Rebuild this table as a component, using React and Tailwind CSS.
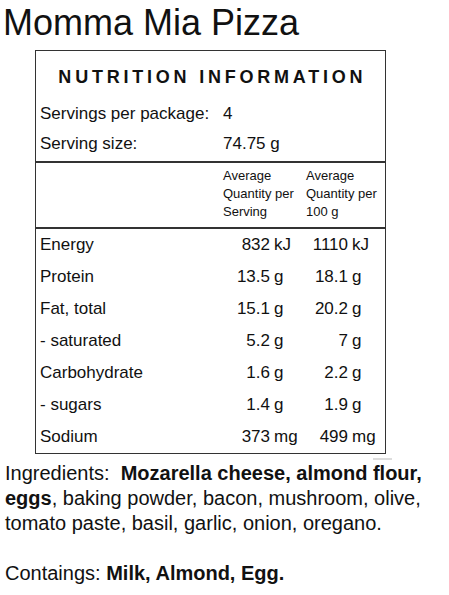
import React from "react";

const rows = [
  { label: "Energy", a: "832", au: "kJ", b: "1110", bu: "kJ" },
  { label: "Protein", a: "13.5", au: "g", b: "18.1", bu: "g" },
  { label: "Fat, total", a: "15.1", au: "g", b: "20.2", bu: "g" },
  { label: "- saturated", a: "5.2", au: "g", b: "7", bu: "g" },
  { label: "Carbohydrate", a: "1.6", au: "g", b: "2.2", bu: "g" },
  { label: "- sugars", a: "1.4", au: "g", b: "1.9", bu: "g" },
  { label: "Sodium", a: "373", au: "mg", b: "499", bu: "mg" },
];

const NutritionPanel = () => {
  return (
    <div className="ml-[35px] w-[351px] border border-[#333]">
      <div className="pt-[12px] pb-[2px] border-b-2 border-[#333]">
        <div className="h-[28px] leading-[28px] text-[18px] font-bold tracking-[0.21em] pl-[0.21em] text-center">
          NUTRITION INFORMATION
        </div>
        <div className="mt-[8px] text-[17px]">
          <div className="flex h-[30px] leading-[30px]">
            <div className="w-[187px] pl-[4px]">Servings per package:</div>
            <div>4</div>
          </div>
          <div className="flex h-[30px] leading-[30px]">
            <div className="w-[187px] pl-[4px]">Serving size:</div>
            <div>74.75 g</div>
          </div>
        </div>
      </div>

      {/* column headings */}
      <div className="flex pt-[4px] pb-[6px] border-b-2 border-[#333] text-[13px] leading-[18px]">
        <div className="w-[187px]" />
        <div className="w-[83px]">
          Average
          <br />
          Quantity per
          <br />
          Serving
        </div>
        <div className="flex-1">
          Average
          <br />
          Quantity per
          <br />
          100 g
        </div>
      </div>

      <div className="text-[17px]">
        {rows.map((r) => (
          <div key={r.label} className="flex h-[32px] leading-[32px]">
            <div className="w-[187px] pl-[4px]">{r.label}</div>
            <div className="w-[47px] text-right">{r.a}</div>
            <div className="w-[36px] pl-[4px]">{r.au}</div>
            <div className="w-[42px] text-right">{r.b}</div>
            <div className="flex-1 pl-[4px]">{r.bu}</div>
          </div>
        ))}
      </div>
    </div>
  );
};

export default function App() {
  return (
    <div
      className="w-[449px] h-[595px] bg-white text-[#111] overflow-hidden"
      style={{ fontFamily: '"Liberation Sans", Arial, sans-serif' }}
    >
      <div className="h-[50px] pt-[2px] pl-[3px] text-[36px] leading-[41px]">
        Momma Mia Pizza
      </div>

      <NutritionPanel />

      <div className="relative h-0">
        <div className="absolute left-[373px] top-[4px] w-[19px] h-[2px] bg-[#ddd]" />
      </div>

      <div className="pt-[7px] pl-[5px] pr-[2px] text-[20px] leading-[25px]">
        <p>
          Ingredients:&nbsp; <b>Mozarella cheese, almond flour,</b>
          <br />
          <b>eggs</b>, baking powder, bacon, mushroom, olive,
          <br />
          tomato paste, basil, garlic, onion, oregano.
        </p>
        <p className="mt-[25px]">
          Contaings: <b>Milk, Almond, Egg.</b>
        </p>
      </div>
    </div>
  );
}
